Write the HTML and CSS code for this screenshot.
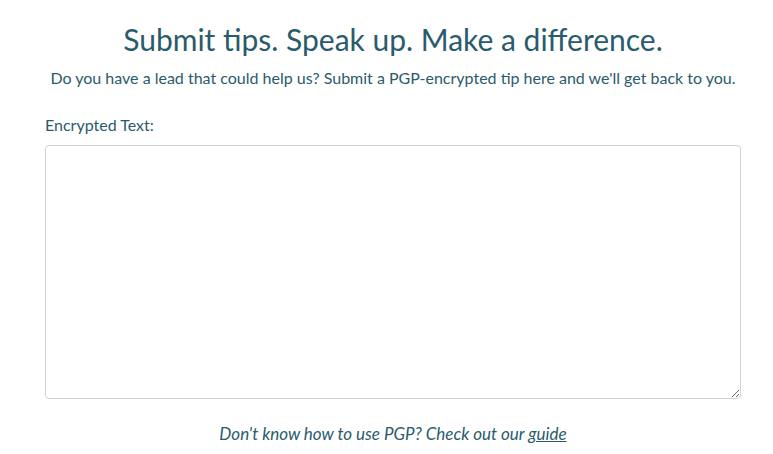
FILE: index.html
```html
<!DOCTYPE html>
<html>
<head>
<meta charset="utf-8">
<link rel="stylesheet" href="styles.css">
</head>
<body>
<main class="page">
  <h1 class="title">Submit tips. Speak up. Make a difference.</h1>
  <p class="lead">Do you have a lead that could help us? Submit a PGP-encrypted tip here and we'll get back to you.</p>
  <label class="label" for="tip">Encrypted Text:</label>
  <textarea id="tip" class="box"></textarea>
  <p class="help">Don't know how to use PGP? Check out our <a href="#" class="link">guide</a></p>
</main>
</body>
</html>
```
FILE: styles.css
```css
html, body {
  margin: 0;
  padding: 0;
  background: #ffffff;
}
.page {
  width: 696px;
  margin-left: 45px;
  display: flex;
  flex-direction: column;
  font-family: "Lato", "Noto Sans", sans-serif;
  color: #2a5b6c;
}
.title {
  margin: 21px 0 0;
  font-weight: 400;
  font-size: 30px;
  line-height: 36px;
  text-align: center;
}
.lead {
  margin: 11px 0 0;
  font-size: 16px;
  line-height: 20px;
  text-align: center;
}
.label {
  margin-top: 27px;
  font-size: 16px;
  line-height: 20px;
}
.box {
  margin-top: 10px;
  height: 254px;
  box-sizing: border-box;
  border: 1px solid #cfd3d6;
  border-radius: 4px;
  resize: vertical;
}
.help {
  margin: 25px 0 0;
  font-size: 17px;
  line-height: 20px;
  font-style: italic;
  text-align: center;
}
.link {
  color: inherit;
}
```
